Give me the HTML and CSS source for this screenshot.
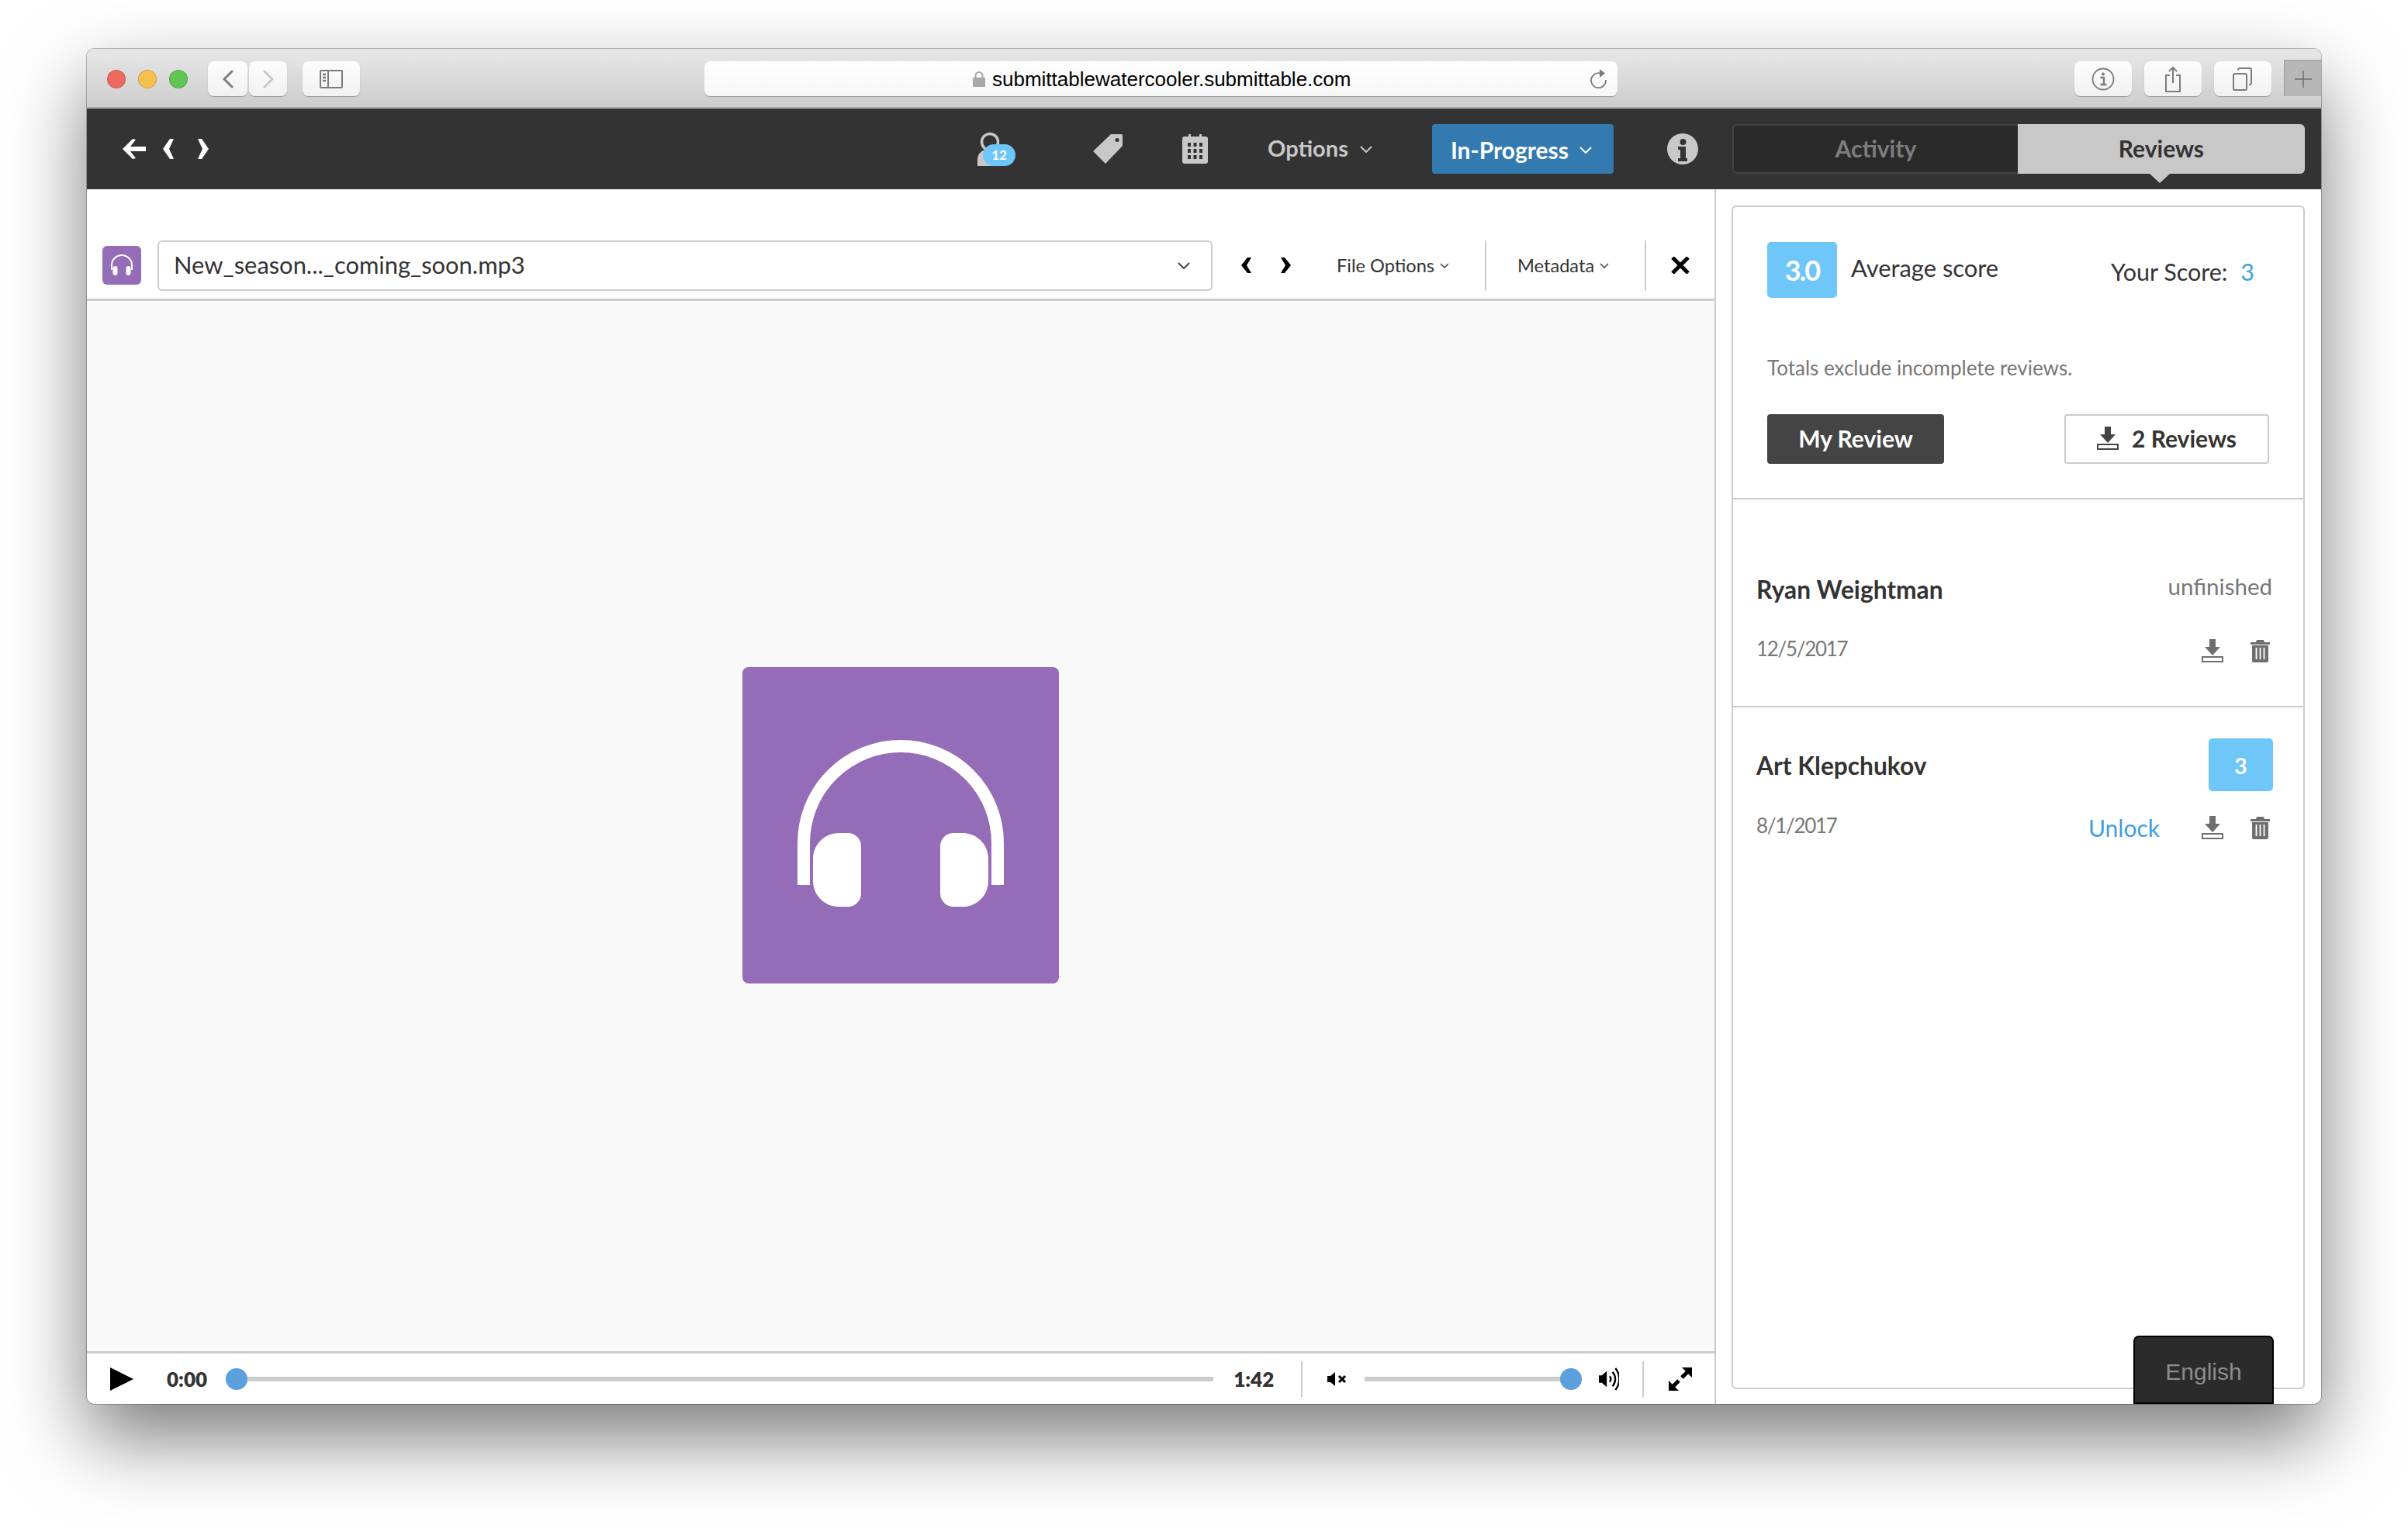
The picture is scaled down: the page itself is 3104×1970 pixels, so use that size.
FILE: index.html
```html
<!DOCTYPE html>
<html lang="en">
<head>
  <meta charset="UTF-8">
  <title>Submittable - Reviews</title>
  <link rel="stylesheet" href="styles.css">
</head>
<body>
  <div class="window">
    <!-- safari chrome -->
    <div class="titlebar">
      <div class="lights">
        <span class="light red"></span>
        <span class="light yellow"></span>
        <span class="light green"></span>
      </div>
      <div class="tb-btn tb-back">
        <svg width="14" height="24" viewBox="0 0 14 24" fill="none" stroke="#7b7b7b" stroke-width="3" stroke-linecap="round"><path d="M12 2 2 12l10 10"/></svg>
      </div>
      <div class="tb-btn tb-forward">
        <svg width="14" height="24" viewBox="0 0 14 24" fill="none" stroke="#c9c9c9" stroke-width="3" stroke-linecap="round"><path d="m2 2 10 10L2 22"/></svg>
      </div>
      <div class="tb-btn tb-sidebar">
        <svg width="30" height="24" viewBox="0 0 30 24" fill="none" stroke="#7b7b7b" stroke-width="2"><rect x="1" y="1" width="28" height="22" rx="1"/><path d="M11 1v22"/><path d="M4 6h4M4 10h4M4 14h4" stroke-width="2.5"/></svg>
      </div>
      <div class="urlbar">
        <svg class="lock" width="16" height="20" viewBox="0 0 16 20"><path d="M3.5 9V5.5a4.5 4.5 0 0 1 9 0V9" fill="none" stroke="#a8a8a8" stroke-width="2"/><rect y="8" width="16" height="12" rx="1" fill="#a8a8a8"/></svg>
        <span class="url">submittablewatercooler.submittable.com</span>
        <svg class="reload" width="24" height="26" viewBox="0 0 24 26" fill="none" stroke="#7b7b7b" stroke-width="1.8"><path d="M14 5.500A9.500 9.500 0 1 0 21 14"/><path d="m13 0 7 5.500-7 5.500z" fill="#7b7b7b" stroke="none"/></svg>
      </div>
      <div class="tb-btn tb-wide tb-first">
        <svg width="30" height="30" viewBox="0 0 30 30" fill="none" stroke="#7b7b7b" stroke-width="1.8"><circle cx="15" cy="15" r="13.5"/><circle cx="15" cy="8.5" r="2" fill="#7b7b7b" stroke="none"/><path d="M11.5 13H16v8.500M11.500 22h8" stroke-width="2.4"/></svg>
      </div>
      <div class="tb-btn tb-wide">
        <svg width="24" height="34" viewBox="0 0 24 34" fill="none" stroke="#7b7b7b" stroke-width="2"><path d="M8 12H3v21h18V12h-5"/><path d="M12 22V2M7 7l5-5 5 5"/></svg>
      </div>
      <div class="tb-btn tb-wide">
        <svg width="26" height="30" viewBox="0 0 26 30" fill="none" stroke="#7b7b7b" stroke-width="2"><rect x="1" y="8" width="17" height="21" rx="2"/><path d="M7 3.500V3a2 2 0 0 1 2-2h13a2 2 0 0 1 2 2v17a2 2 0 0 1-2 2h-1"/></svg>
      </div>
      <div class="new-tab">
        <svg width="22" height="22" viewBox="0 0 22 22" stroke="#6f6f6f" stroke-width="1.5"><path d="M11 0v22M0 11h22"/></svg>
      </div>
    </div>

    <!-- dark app bar -->
    <header class="appbar">
      <svg class="back-arrow" width="30" height="26" viewBox="0 0 30 26" fill="#fff"><path d="M13 0 0 13l13 13 4-1-7-9h20v-6H10l7-9z"/></svg>
      <svg class="nav-prev" width="15" height="26" viewBox="0 0 15 26" fill="#fff"><path d="M9 0h5L8 13l6 13H9L0 13z"/></svg>
      <svg class="nav-next" width="15" height="26" viewBox="0 0 15 26" fill="#fff"><path d="M6 0H1l6 13-6 13h5l9-13z"/></svg>

      <div class="people">
        <svg width="32" height="44" viewBox="0 0 32 44"><circle cx="17" cy="13" r="10.5" fill="none" stroke="#c8c8c8" stroke-width="3.5"/><path d="M1 44v-8c0-8 5-12 11-13h10v21z" fill="#c8c8c8"/></svg>
        <span class="people-count">12</span>
      </div>
      <svg class="tag-icon" width="38" height="38" viewBox="0 0 38 38" fill="#c8c8c8"><path d="M23 0h13a2 2 0 0 1 2 2v13L16 38 0 22zm8 5a2.500 2.500 0 1 0 0 5 2.500 2.500 0 0 0 0-5z" fill-rule="evenodd"/></svg>
      <svg class="cal-icon" width="33" height="38" viewBox="0 0 33 38"><path d="M3 3h5V0h3v3h11V0h3v3h5a3 3 0 0 1 3 3v29a3 3 0 0 1-3 3H3a3 3 0 0 1-3-3V6a3 3 0 0 1 3-3z" fill="#c8c8c8"/><path d="M7 11h4v5H7zM14.500 11h4v5h-4zM22 11h4v5h-4zM7 19h4v5H7zM14.500 19h4v5h-4zM22 19h4v5h-4zM7 27h4v5H7zM14.500 27h4v5h-4zM22 27h4v5h-4z" fill="#333"/></svg>
      <div class="options">Options<svg class="caret" width="16" height="9" viewBox="0 0 16 9" fill="none" stroke="#c8c8c8" stroke-width="2"><path d="m1 1 7 7 7-7"/></svg></div>
      <div class="status-btn">In-Progress<svg class="caret" width="16" height="9" viewBox="0 0 16 9" fill="none" stroke="#fff" stroke-width="2"><path d="m1 1 7 7 7-7"/></svg></div>
      <svg class="info-icon" width="40" height="40" viewBox="0 0 40 40"><circle cx="20" cy="20" r="20" fill="#c8c8c8"/><circle cx="20.5" cy="11" r="4" fill="#333"/><path d="M14 17h10v15h2v4H14v-4h3V21h-3z" fill="#333"/></svg>
      <div class="tabs">
        <div class="tab">Activity</div>
        <div class="tab tab-active">Reviews</div>
      </div>
    </header>

    <div class="main">
      <section class="viewer">
        <div class="file-bar">
          <div class="file-type">
            <svg width="32" height="28" viewBox="0 0 32 28"><path d="M3 20v-6a13 13 0 0 1 26 0v6" fill="none" stroke="#fff" stroke-width="2"/><rect x="4.5" y="15" width="6" height="12" rx="3" fill="#fff"/><rect x="21.5" y="15" width="6" height="12" rx="3" fill="#fff"/></svg>
          </div>
          <div class="file-select">
            <span class="file-name">New_season..._coming_soon.mp3</span>
            <svg width="16" height="9" viewBox="0 0 16 9" fill="none" stroke="#444" stroke-width="2"><path d="m1 1 7 7 7-7"/></svg>
          </div>
          <svg class="file-prev" width="14" height="20" viewBox="0 0 14 20"><path d="M8 0h5L7 10l6 10H8L0 10z"/></svg>
          <svg class="file-next" width="14" height="20" viewBox="0 0 14 20"><path d="M6 0H1l6 10-6 10h5l8-10z"/></svg>
          <div class="file-menu file-options">File Options<svg width="12" height="7" viewBox="0 0 12 7" fill="none" stroke="#444" stroke-width="1.5"><path d="m1 1 5 5 5-5"/></svg></div>
          <div class="vsep"></div>
          <div class="file-menu file-meta">Metadata<svg width="12" height="7" viewBox="0 0 12 7" fill="none" stroke="#444" stroke-width="1.5"><path d="m1 1 5 5 5-5"/></svg></div>
          <div class="vsep"></div>
          <svg class="file-close" width="24" height="22" viewBox="0 0 24 22" stroke="#000" stroke-width="5"><path d="m2 1 20 20M22 1 2 21"/></svg>
        </div>

        <div class="media">
          <div class="cover">
            <svg width="408" height="408" viewBox="0 0 408 408" fill="#fff">
              <path d="M79 281v-54a125 125 0 0 1 250 0v54" fill="none" stroke="#fff" stroke-width="16"/>
              <path d="M124 214h12a17 17 0 0 1 17 17v61a17 17 0 0 1-17 17h-12c-18 0-33-15-33-33v-29c0-18 15-33 33-33z"/>
              <path d="M284 214h-12a17 17 0 0 0-17 17v61a17 17 0 0 0 17 17h12c18 0 33-15 33-33v-29c0-18-15-33-33-33z"/>
            </svg>
          </div>
        </div>

        <div class="player">
          <svg class="play" width="30" height="30" viewBox="0 0 30 30"><path d="M0 0v30l30-15z"/></svg>
          <span class="time time-now">0:00</span>
          <div class="track track-seek"><span class="knob knob-start"></span></div>
          <span class="time time-end">1:42</span>
          <div class="vsep vsep-player"></div>
          <svg class="mute" width="25" height="20" viewBox="0 0 25 20"><path d="M0 6h4l6-5v18l-6-5H0z"/><path d="m15 6 8 8m0-8-8 8" stroke="#000" stroke-width="3"/></svg>
          <div class="track track-volume"><span class="knob knob-end"></span></div>
          <svg class="speaker" width="26" height="32" viewBox="0 0 28 34"><path d="M0 12h4l7-6v22l-7-6H0z"/><g fill="none" stroke="#000" stroke-width="2.5"><path d="M15 13c2 2.500 2 5.500 0 8"/><path d="M19 7c5 6 5 14 0 20"/><path d="M23 2c7 9 7 21 0 30"/></g></svg>
          <div class="vsep vsep-player vsep-last"></div>
          <svg class="fullscreen" width="30" height="30" viewBox="0 0 30 30"><path d="M17 0h13v13zM13 30H0V17z"/><path d="m25 5-8 8M5 25l8-8" stroke="#000" stroke-width="5"/></svg>
        </div>
      </section>

      <aside class="side">
        <div class="card">
          <div class="summary">
            <div class="score-line">
              <div class="score-box">3.0</div>
              <div class="score-label">Average score</div>
              <div class="your-score">Your Score: <span class="your-value">3</span></div>
            </div>
            <p class="totals-note">Totals exclude incomplete reviews.</p>
            <div class="summary-actions">
              <div class="btn-dark">My Review</div>
              <div class="btn-light">
                <svg class="dl-icon" width="28" height="30" viewBox="0 0 28 30"><use href="#dl"/></svg>
                2 Reviews
              </div>
            </div>
          </div>

          <div class="review">
            <div class="review-top">
              <span class="reviewer">Ryan Weightman</span>
              <span class="review-status">unfinished</span>
            </div>
            <div class="review-bottom">
              <span class="review-date">12/5/2017</span>
              <svg class="dl-icon icon-gray" width="28" height="30" viewBox="0 0 28 30"><use href="#dl"/></svg>
              <svg class="trash" width="25" height="30" viewBox="0 0 25 30"><use href="#trash"/></svg>
            </div>
          </div>

          <div class="review review-scored">
            <div class="review-top">
              <span class="reviewer">Art Klepchukov</span>
              <span class="review-score">3</span>
            </div>
            <div class="review-bottom">
              <span class="review-date">8/1/2017</span>
              <span class="unlock">Unlock</span>
              <svg class="dl-icon icon-gray" width="28" height="30" viewBox="0 0 28 30"><use href="#dl"/></svg>
              <svg class="trash" width="25" height="30" viewBox="0 0 25 30"><use href="#trash"/></svg>
            </div>
          </div>
        </div>
      </aside>
    </div>

    <div class="language">English</div>
  </div>

  <!-- shared icons -->
  <svg class="defs" width="0" height="0">
    <symbol id="dl" viewBox="0 0 28 30">
      <path d="M10 0h8v10h6L14 21 4 10h6z" fill="currentColor"/>
      <path d="M1 23h26v6H1z" fill="#fff" stroke="currentColor" stroke-width="2"/>
    </symbol>
    <symbol id="trash" viewBox="0 0 25 30">
      <path d="M8 1h9l1 3h7v3H0V4h7z" fill="currentColor"/>
      <path d="M2 8h21v20a2 2 0 0 1-2 2H4a2 2 0 0 1-2-2z" fill="currentColor"/>
      <path d="M7.500 11v15M12.500 11v15M17.500 11v15" stroke="#fff" stroke-width="1.8"/>
    </symbol>
  </svg>
</body>
</html>
```

FILE: styles.css
```css
:root {
  --bar: #333333;
  --line: #cccccc;
  --icon: #c8c8c8;
  --sky: #6ec6f9;
  --link: #3f9fe0;
  --purple: #956cb8;
  --knob: #5b9fdc;
  --text: #333333;
  --muted: #777777;
}

html, body {
  margin: 0;
  background-color: #ffffff;
}

body {
  padding: 63px 112px 160px;
  font-family: 'Lato', sans-serif;
  color: var(--text);
}

.defs {
  position: absolute;
}

.window {
  position: relative;
  height: 1747px;
  display: flex;
  flex-direction: column;
  background-color: #ffffff;
  border-radius: 10px;
  overflow: hidden;
}

body::before {
  content: "";
  position: absolute;
  left: 112px;
  top: 63px;
  width: 2880px;
  height: 1747px;
  border-radius: 10px;
  box-shadow: 0 44px 100px rgba(0, 0, 0, 0.52), 0 0 0 1px rgba(0, 0, 0, 0.25);
}

/* titlebar */
.titlebar {
  height: 77px;
  box-sizing: border-box;
  display: flex;
  align-items: flex-start;
  padding: 16px 0 0 26px;
  background: linear-gradient(#e7e7e7, #cdcdcd);
  border-bottom: 2px solid #a9a9a9;
  flex-shrink: 0;
}

.lights {
  display: flex;
  gap: 16px;
  margin-top: 11px;
}

.light {
  width: 24px;
  height: 24px;
  box-sizing: border-box;
  border-radius: 50%;
  border: 1px solid rgba(0, 0, 0, 0.15);
}

.red { background-color: #ee6a5f; }
.yellow { background-color: #f6c04f; }
.green { background-color: #61c554; }

.tb-btn {
  height: 45px;
  display: flex;
  align-items: center;
  justify-content: center;
  background: linear-gradient(#fdfdfd, #f1f1f1);
  border-radius: 8px;
  box-shadow: 0 1px 1px rgba(0, 0, 0, 0.3);
}

.tb-back { width: 51px; margin-left: 26px; }
.tb-forward { width: 49px; margin-left: 2px; }
.tb-sidebar { width: 74px; margin-left: 20px; }
.tb-wide { width: 74px; margin-left: 16px; }
.tb-first { margin-left: 589px; }

.urlbar {
  width: 1177px;
  height: 45px;
  margin-left: 444px;
  display: flex;
  align-items: center;
  background: linear-gradient(#ffffff, #f7f7f7);
  border-radius: 8px;
  box-shadow: 0 1px 1px rgba(0, 0, 0, 0.3);
  padding-left: 346px;
  box-sizing: border-box;
}

.lock { margin-right: 9px; }

.url {
  padding-top: 2px;
  font-family: 'Liberation Sans', sans-serif;
  font-size: 26px;
  color: #000000;
}

.reload { margin-left: auto; margin-right: 12px; }

.new-tab {
  width: 48px;
  height: 47px;
  margin-left: 16px;
  margin-top: -2px;
  display: flex;
  align-items: center;
  justify-content: center;
  background-color: #b7b7b7;
  border-left: 2px solid #a9a9a9;
  border-top: 2px solid #a9a9a9;
  box-sizing: border-box;
}

/* app bar */
.appbar {
  height: 104px;
  flex-shrink: 0;
  display: flex;
  align-items: center;
  background-color: var(--bar);
  padding-left: 46px;
}

.nav-prev { margin-left: 22px; }
.nav-next { margin-left: 29px; }

.people {
  position: relative;
  width: 50px;
  height: 44px;
  margin-left: 990px;
}

.people-count {
  position: absolute;
  left: 8px;
  top: 16px;
  width: 42px;
  height: 28px;
  border-radius: 14px;
  background-color: var(--sky);
  color: #ffffff;
  font-size: 17px;
  font-weight: 700;
  line-height: 28px;
  text-align: center;
}

.tag-icon { margin-left: 100px; }
.cal-icon { margin-left: 77px; }

.options {
  margin-left: 77px;
  padding-bottom: 4px;
  display: flex;
  align-items: center;
  color: var(--icon);
  font-size: 29px;
  font-weight: 700;
}

.options .caret { margin-top: 4px; }

.caret { margin-left: 15px; }

.status-btn {
  width: 234px;
  height: 64px;
  margin-left: 77px;
  padding: 2px 4px 0 0;
  box-sizing: border-box;
  display: flex;
  align-items: center;
  justify-content: center;
  background-color: #337ab0;
  border-radius: 4px;
  color: #ffffff;
  font-size: 30px;
  font-weight: 700;
}

.status-btn .caret { margin-left: 14px; }

.info-icon { margin-left: 69px; }

.tabs {
  margin-left: 44px;
  width: 738px;
  height: 64px;
  display: flex;
  background-color: #2a2a2a;
  border-radius: 6px;
}

.tab {
  flex: 1;
  display: flex;
  align-items: center;
  justify-content: center;
  padding-bottom: 2px;
  border: 2px solid #444444;
  border-right: none;
  border-radius: 6px 0 0 6px;
  color: #7d7d7d;
  font-size: 30px;
  font-weight: 700;
}

.tab-active {
  position: relative;
  flex: none;
  width: 370px;
  border: none;
  border-radius: 0 6px 6px 0;
  background-color: var(--icon);
  color: #333333;
}

.tab-active::after {
  content: "";
  position: absolute;
  left: 170px;
  top: 64px;
  border-style: solid;
  border-width: 12px 13px 0;
  border-color: var(--icon) transparent transparent;
}

/* main split */
.main {
  flex: 1;
  min-height: 0;
  display: flex;
}

.viewer {
  width: 2100px;
  box-sizing: border-box;
  display: flex;
  flex-direction: column;
  border-right: 2px solid var(--line);
}

.file-bar {
  height: 144px;
  box-sizing: border-box;
  flex-shrink: 0;
  display: flex;
  align-items: center;
  padding: 66px 0 11px 20px;
  border-bottom: 3px solid var(--line);
}

.file-type {
  width: 50px;
  height: 50px;
  display: flex;
  align-items: center;
  justify-content: center;
  background-color: var(--purple);
  border-radius: 6px;
}

.file-select {
  width: 1360px;
  height: 65px;
  box-sizing: border-box;
  margin-left: 21px;
  padding: 0 27px 0 19px;
  display: flex;
  align-items: center;
  justify-content: space-between;
  border: 2px solid var(--line);
  border-radius: 6px;
}

.file-name {
  padding-bottom: 1px;
  font-size: 30.9px;
}

.file-prev { margin-left: 37px; }
.file-next { margin-left: 36px; }

.file-menu {
  display: flex;
  align-items: center;
  gap: 7px;
  font-size: 23.6px;
}

.file-options { margin-left: 59px; }
.file-meta { margin-left: 40px; }

.vsep {
  width: 2px;
  height: 65px;
  background-color: var(--line);
  margin-left: 46px;
}

.file-close { margin-left: 32px; }

.media {
  flex: 1;
  min-height: 0;
  padding-bottom: 2px;
  display: flex;
  align-items: center;
  justify-content: center;
  background-color: #f9f9f9;
}

.cover {
  width: 408px;
  height: 408px;
  background-color: var(--purple);
  border-radius: 8px;
}

.cover svg {
  display: block;
}

/* player */
.player {
  height: 68px;
  box-sizing: border-box;
  flex-shrink: 0;
  display: flex;
  align-items: center;
  padding-left: 30px;
  border-top: 3px solid var(--line);
}

.time {
  font-size: 26px;
  font-weight: 800;
}

.time-now { margin-left: 43px; }
.time-end { margin-left: 26px; }

.track {
  position: relative;
  height: 6px;
  background-color: var(--line);
}

.track-seek { width: 1273px; margin-left: 24px; }
.track-volume { width: 280px; margin-left: 23px; }

.knob {
  position: absolute;
  top: -11px;
  width: 28px;
  height: 28px;
  border-radius: 50%;
  background-color: var(--knob);
}

.knob-start { left: 0; }
.knob-end { right: 0; }

.vsep-player {
  height: 46px;
  margin-left: 35px;
}

.vsep-last { margin-left: 30px; }

.mute { margin-left: 32px; }
.speaker { margin-left: 22px; }
.fullscreen { margin-left: 32px; }

/* right column */
.side {
  flex: 1;
  min-width: 0;
  display: flex;
  padding: 21px 21px 19px 20px;
}

.card {
  flex: 1;
  box-sizing: border-box;
  border: 2px solid var(--line);
  border-radius: 6px;
}

.summary {
  height: 377px;
  box-sizing: border-box;
  padding: 45px 44px 0 44px;
  border-bottom: 2px solid var(--line);
}

.score-line {
  display: flex;
  align-items: center;
}

.score-box {
  width: 90px;
  height: 72px;
  display: flex;
  align-items: center;
  justify-content: center;
  background-color: var(--sky);
  border-radius: 5px;
  color: #ffffff;
  font-size: 36px;
  font-weight: 700;
  letter-spacing: -2px;
}

.score-label {
  margin-left: 18px;
  padding-bottom: 6px;
  font-size: 30.9px;
}

.your-score {
  margin-left: auto;
  margin-right: 19px;
  padding-top: 3px;
  font-size: 30.5px;
  white-space: pre;
}

.your-value {
  margin-left: 9px;
  color: var(--link);
}

.totals-note {
  margin: 75px 0 0;
  color: var(--muted);
  font-size: 26px;
  line-height: 30px;
}

.summary-actions {
  margin-top: 45px;
  display: flex;
  justify-content: space-between;
}

.btn-dark, .btn-light {
  height: 64px;
  box-sizing: border-box;
  display: flex;
  align-items: center;
  justify-content: center;
  border-radius: 4px;
  padding-bottom: 2px;
  font-size: 30px;
  font-weight: 700;
}

.btn-dark {
  width: 228px;
  background-color: #444444;
  color: #ffffff;
}

.btn-light {
  width: 264px;
  gap: 17px;
  border: 2px solid var(--line);
  background-color: #ffffff;
}

.dl-icon {
  color: #444444;
}

.icon-gray {
  color: #6f6f6f;
}

.trash {
  color: #6f6f6f;
  margin-left: 35px;
}

.review {
  height: 268px;
  box-sizing: border-box;
  padding: 82px 40px 0 30px;
  border-bottom: 2px solid var(--line);
}

.review-scored {
  height: auto;
  padding: 40px 39px 0 30px;
  border-bottom: none;
}

.review-top {
  display: flex;
  align-items: center;
  justify-content: space-between;
  height: 68px;
}

.reviewer {
  font-size: 31.7px;
  font-weight: 700;
}

.review-scored .reviewer {
  padding-top: 2px;
}

.review-status {
  color: var(--muted);
  font-size: 29.5px;
  margin-top: -10px;
}

.review-score {
  width: 83px;
  height: 68px;
  display: flex;
  align-items: center;
  justify-content: center;
  background-color: var(--sky);
  border-radius: 5px;
  color: #ffffff;
  font-size: 29px;
  font-weight: 700;
}

.review-bottom {
  display: flex;
  align-items: center;
  margin-top: 22px;
  padding-right: 3px;
  height: 46px;
}

.review-scored .review-bottom {
  margin-top: 24px;
  padding-right: 4px;
}

.review-date {
  margin-right: auto;
  margin-top: -6px;
  color: var(--muted);
  font-size: 26px;
  letter-spacing: -1.3px;
}

.unlock {
  margin-right: 54px;
  color: var(--link);
  font-size: 30px;
}

.language {
  position: absolute;
  right: 61px;
  bottom: 0;
  width: 181px;
  height: 88px;
  box-sizing: border-box;
  padding-top: 28px;
  background-color: #2b2b2b;
  border: 2px solid #000000;
  border-radius: 7px 7px 0 0;
  color: #8c8c8c;
  font-family: 'Liberation Sans', sans-serif;
  font-size: 30px;
  line-height: 34px;
  text-align: center;
}
```
